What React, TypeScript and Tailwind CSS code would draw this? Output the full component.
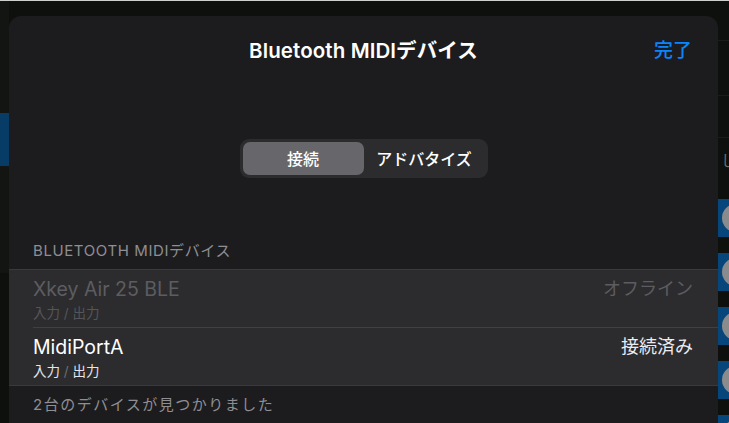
import React from 'react';

type Device = {
    name: string;
    status: string;
    online: boolean;
};

const devices: Device[] = [
    { name: 'Xkey Air 25 BLE', status: 'オフライン', online: false },
    { name: 'MidiPortA', status: '接続済み', online: true },
];

const font = { fontFamily: 'Inter, "Noto Sans CJK JP", sans-serif' };

const App: React.FC = () => {
    const [tab, setTab] = React.useState<'connect' | 'advertise'>('connect');

    return (
        <div className="relative w-[729px] h-[423px] overflow-hidden bg-[#0e100d] border-t border-[#cfcfcf]" style={font}>
            {/* Background app peeking out on both sides */}
            <div className="absolute left-0 top-0 w-[9px] h-[272px] bg-[#131512]" />
            <div className="absolute left-0 top-[112px] w-[9px] h-[53px] bg-[#063c66]" />
            <div className="absolute right-0 top-0 w-[11px] h-full flex flex-col">
                <div className="h-[40px] shrink-0 border-b border-[#1a1c19]" />
                <div className="h-[55px] shrink-0 border-b border-[#1a1c19]" />
                <div className="h-[42px] shrink-0 border-b border-[#1a1c19]" />
                <div className="h-[56px] shrink-0 pl-[3px] pt-[14px] text-[#6b6e6b] text-[15px] leading-[18px]">し</div>
                {[0, 1, 2, 3, 4].map((i) => (
                    <div key={i} className="h-[54px] shrink-0 pt-[5px]">
                        <div className="h-[38px] bg-[#06467a] flex items-center">
                            <div className="w-[28px] h-[28px] rounded-full bg-[#8a8b8d] shrink-0 ml-[4px]" />
                        </div>
                    </div>
                ))}
            </div>

            {/* Sheet */}
            <div className="absolute left-[9px] top-[15px] w-[709px] h-[420px] bg-[#1c1c1e] rounded-t-[12px]">
                <div className="relative h-[70px] flex items-center justify-center">
                    <h1 className="text-[20.5px] font-semibold text-white tracking-[0.1px]">Bluetooth MIDIデバイス</h1>
                    <button className="absolute right-[26px] top-[21px] text-[19px] leading-[28px] font-medium text-[#0a84ff]">完了</button>
                </div>

                <div className="mt-[53px] flex justify-center">
                    <div className="w-[248px] h-[39px] p-[3px] bg-[#2c2c2e] rounded-[9px] flex">
                        <button
                            onClick={() => setTab('connect')}
                            className={`flex-1 rounded-[7px] text-[16px] font-medium text-white ${tab === 'connect' ? 'bg-[#67676b]' : ''}`}
                        >
                            接続
                        </button>
                        <button
                            onClick={() => setTab('advertise')}
                            className={`flex-1 rounded-[7px] text-[16px] font-medium text-white ${tab === 'advertise' ? 'bg-[#67676b]' : ''}`}
                        >
                            アドバタイズ
                        </button>
                    </div>
                </div>

                <div className="mt-[64px] px-[24px] text-[15px] tracking-[0.6px] text-[#8e8e93] leading-[18px]">BLUETOOTH MIDIデバイス</div>

                <ul className="mt-[9px] bg-[#2c2c2e] border-y border-[#3a3a3c]">
                    {devices.map((d, i) => (
                        <li key={d.name} className="pl-[24px]">
                            <div className={`h-[57px] pr-[25px] flex justify-between pt-[7px] ${i > 0 ? 'h-[58px] border-t border-[#404043]' : ''}`}>
                                <div className="flex flex-col">
                                    <span className={`text-[19.5px] leading-[24px] ${d.online ? 'text-white' : 'text-[#5d5d61]'}`}>{d.name}</span>
                                    <span className={`text-[13.5px] leading-[18px] mt-[3px] ${d.online ? 'text-[#e5e5ea]' : 'text-[#555559]'}`}>
                                        入力 <span className={d.online ? 'text-[#6e6e72]' : ''}>/</span> 出力
                                    </span>
                                </div>
                                <span className={`text-[18px] leading-[24px] ${d.online ? 'text-[#ebebf0]' : 'text-[#5d5d61]'}`}>{d.status}</span>
                            </div>
                        </li>
                    ))}
                </ul>

                <div className="mt-[10px] px-[24px] text-[15px] tracking-[1.5px] text-[#8e8e93] leading-[18px]">2台のデバイスが見つかりました</div>
            </div>
        </div>
    );
};

export default App;
